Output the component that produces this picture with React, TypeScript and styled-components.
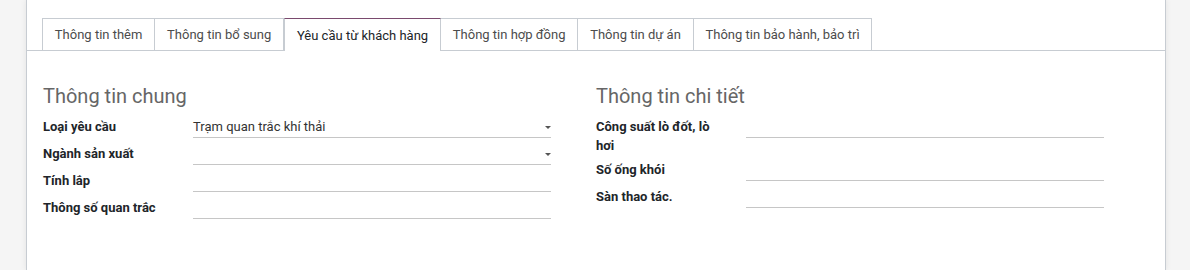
import React from "react";
import styled, { createGlobalStyle } from "styled-components";

const Global = createGlobalStyle`
  html, body { margin: 0; padding: 0; }
  body {
    background: #f5f5f5;
    font-family: Roboto, "Noto Sans", sans-serif;
    font-size: 13px;
    color: #212529;
  }
`;

const Page = styled.div`
  height: 270px;
  overflow: hidden;
  padding-left: 26px;
`;

const Sheet = styled.div`
  width: 1140px;
  box-sizing: border-box;
  height: 270px;
  background: #fff;
  border-left: 1px solid #c7ccd2;
  border-right: 1px solid #c7ccd2;
  box-shadow: 0 0 6px rgba(0, 0, 0, 0.08);
  padding-top: 18px;
`;

const TabNav = styled.div`
  display: flex;
  padding-left: 15px;
  border-bottom: 1px solid #c7ccd2;
  height: 32px;
`;

const Tab = styled.div<{ $active?: boolean }>`
  box-sizing: border-box;
  height: ${(p) => (p.$active ? "33px" : "32px")};
  padding: 0 11.85px;
  display: flex;
  align-items: center;
  white-space: nowrap;
  color: ${(p) => (p.$active ? "#212529" : "#4c4c4c")};
  background: #fff;
  border: 1px solid #c7ccd2;
  border-left-width: ${(p) => (p.$active ? "1px" : "0")};
  border-top-color: ${(p) => (p.$active ? "#7a4a6e" : "#c7ccd2")};
  border-bottom: ${(p) => (p.$active ? "none" : "0")};
  &:first-child {
    border-left-width: 1px;
  }
`;

const Content = styled.div`
  display: flex;
  gap: 45px;
  padding: 33px 16px 0;
`;

const Group = styled.div`
  width: 508px;
`;

const Title = styled.div`
  font-size: 20px;
  line-height: 24px;
  color: #666;
  margin-bottom: 6px;
`;

const Row = styled.div`
  display: grid;
  grid-template-columns: 150px 1fr;
  align-items: start;
`;

const Label = styled.div`
  font-weight: 700;
  line-height: 19px;
  padding: 3px 20px 2px 0;
  color: #212529;
`;

const Field = styled.div`
  position: relative;
  box-sizing: border-box;
  height: 21px;
  margin: 3px 0 3px;
  border-bottom: 1px solid #c6c6c6;
  line-height: 19px;
  color: #333;
  padding-right: 16px;
`;

const Caret = styled.span`
  position: absolute;
  right: 0;
  top: 9px;
  width: 0;
  height: 0;
  border-left: 3px solid transparent;
  border-right: 3px solid transparent;
  border-top: 3px solid #555;
`;

const tabs = [
  "Thông tin thêm",
  "Thông tin bổ sung",
  "Yêu cầu từ khách hàng",
  "Thông tin hợp đồng",
  "Thông tin dự án",
  "Thông tin bảo hành, bảo trì",
];

type F = { label: string; value?: string; select?: boolean };

const left: F[] = [
  { label: "Loại yêu cầu", value: "Trạm quan trắc khí thải", select: true },
  { label: "Ngành sản xuất", select: true },
  { label: "Tính lắp" },
  { label: "Thông số quan trắc" },
];

const right: F[] = [
  { label: "Công suất lò đốt, lò hơi" },
  { label: "Số ống khói" },
  { label: "Sàn thao tác." },
];

const FieldGroup = ({ title, fields }: { title: string; fields: F[] }) => (
  <Group>
    <Title>{title}</Title>
    {fields.map((f) => (
      <Row key={f.label}>
        <Label>{f.label}</Label>
        <Field>
          {f.value}
          {f.select && <Caret />}
        </Field>
      </Row>
    ))}
  </Group>
);

export default function App() {
  return (
    <>
      <Global />
      <Page>
        <Sheet>
          <TabNav>
            {tabs.map((t, i) => (
              <Tab key={t} $active={i === 2}>
                {t}
              </Tab>
            ))}
          </TabNav>
          <Content>
            <FieldGroup title="Thông tin chung" fields={left} />
            <FieldGroup title="Thông tin chi tiết" fields={right} />
          </Content>
        </Sheet>
      </Page>
    </>
  );
}
